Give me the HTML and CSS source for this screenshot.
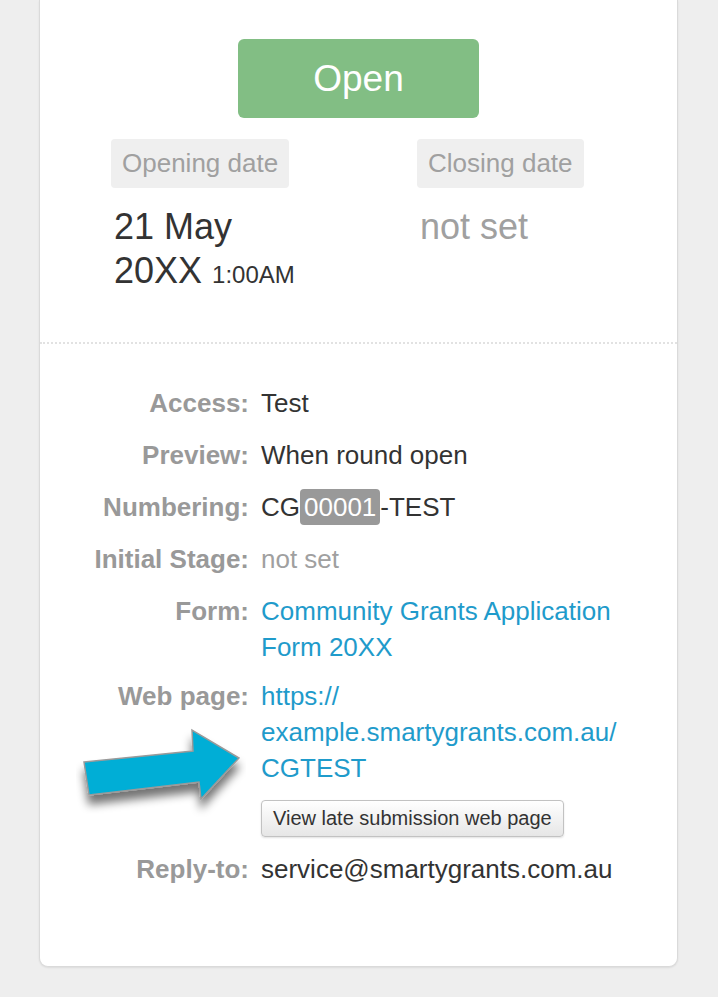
FILE: index.html
```html
<!DOCTYPE html>
<html lang="en">
<head>
<meta charset="utf-8">
<title>Round details</title>
<link rel="stylesheet" href="styles.css">
</head>
<body>
<div class="page">
  <div class="card">
    <section class="status">
      <div class="status-badge">Open</div>
      <div class="dates">
        <div class="date-col">
          <span class="date-label">Opening date</span>
          <div class="date-value">21 May<br>20XX <small class="time">1:00AM</small></div>
        </div>
        <div class="date-col">
          <span class="date-label">Closing date</span>
          <div class="date-value muted">not set</div>
        </div>
      </div>
    </section>
    <section class="details">
      <dl class="props">
        <dt>Access:</dt>
        <dd>Test</dd>
        <dt>Preview:</dt>
        <dd>When round open</dd>
        <dt>Numbering:</dt>
        <dd>CG<span class="seq">00001</span>-TEST</dd>
        <dt>Initial Stage:</dt>
        <dd class="muted">not set</dd>
        <dt>Form:</dt>
        <dd><a href="#">Community Grants Application Form 20XX</a></dd>
        <dt class="tight">Web page:</dt>
        <dd class="tight"><a href="#">https://<wbr>example.smartygrants.com.au/<wbr>CGTEST</a>
          <div class="btn-wrap"><button class="btn" type="button">View late submission web page</button></div>
        </dd>
        <dt>Reply-to:</dt>
        <dd>service@smartygrants.com.au</dd>
      </dl>
      <svg class="pointer" width="170" height="110" viewBox="0 0 170 110" aria-hidden="true">
        <defs>
          <filter id="sh" x="-30%" y="-30%" width="160%" height="180%">
            <feGaussianBlur in="SourceAlpha" stdDeviation="5"/>
            <feOffset dx="0" dy="9" result="b"/>
            <feComponentTransfer><feFuncA type="linear" slope="0.55"/></feComponentTransfer>
            <feMerge><feMergeNode/><feMergeNode in="SourceGraphic"/></feMerge>
          </filter>
        </defs>
        <polygon filter="url(#sh)" points="8,49 117,38 116,17 163,45 125,86 123,69 13,82" fill="#00aed6" stroke="#9a9a9a" stroke-width="1.5" stroke-linejoin="miter"/>
      </svg>
    </section>
  </div>
</div>
</body>
</html>
```
FILE: styles.css
```css
html, body {
  margin: 0;
  padding: 0;
  background: #eeeeee;
}
body {
  font-family: "Liberation Sans", Arial, sans-serif;
  color: #333333;
}
.page {
  padding: 0 40px 32px 39px;
}
.card {
  background: #ffffff;
  border: 1px solid #dadada;
  border-top: 0;
  border-radius: 0 0 9px 9px;
  box-shadow: 0 1px 2px rgba(0, 0, 0, 0.08);
}
.status {
  padding: 39px 0 49px;
  border-bottom: 2px dotted #e2e2e2;
}
.status-badge {
  width: 241px;
  height: 79px;
  margin: 0 auto;
  background: #82be84;
  border-radius: 6px;
  color: #ffffff;
  font-size: 37px;
  line-height: 79px;
  text-align: center;
}
.dates {
  display: grid;
  grid-template-columns: 306px 1fr;
  padding-left: 71px;
  margin-top: 21px;
}
.date-label {
  display: block;
  width: fit-content;
  background: #efefef;
  color: #a0a0a0;
  font-size: 26px;
  line-height: 37px;
  padding: 6px 11px;
  border-radius: 4px;
}
.date-value {
  margin-top: 17px;
  padding-left: 3px;
  font-size: 36px;
  line-height: 44px;
  color: #333333;
}
.date-value.muted {
  color: #a0a0a0;
}
.time {
  font-size: 24px;
  line-height: 1;
}
.details {
  position: relative;
  padding: 41px 0 79px;
}
.props {
  display: grid;
  grid-template-columns: 209px 366px;
  column-gap: 12px;
  row-gap: 16px;
  margin: 0;
  font-size: 26px;
  line-height: 36px;
}
.props dt {
  text-align: right;
  font-weight: bold;
  color: #999999;
}
.props dd {
  margin: 0;
  color: #333333;
}
.props .tight {
  margin-top: -3px;
}
.props dd.muted {
  color: #a0a0a0;
}
.props a {
  color: #1f9bcb;
  text-decoration: none;
}
.seq {
  display: inline-block;
  background: #999999;
  color: #ffffff;
  padding: 0 4px;
  border-radius: 4px;
}
.btn-wrap {
  margin-top: 12px;
  margin-bottom: -2px;
}
.btn {
  font-family: "Liberation Sans", Arial, sans-serif;
  font-size: 20px;
  line-height: 22px;
  color: #333333;
  padding: 6px 11px 7px;
  background: linear-gradient(#ffffff, #e6e6e6);
  border: 1px solid #c2c2c2;
  border-radius: 4px;
  box-shadow: 0 1px 2px rgba(0, 0, 0, 0.12);
}
.pointer {
  position: absolute;
  left: 36px;
  top: 369px;
}
```
